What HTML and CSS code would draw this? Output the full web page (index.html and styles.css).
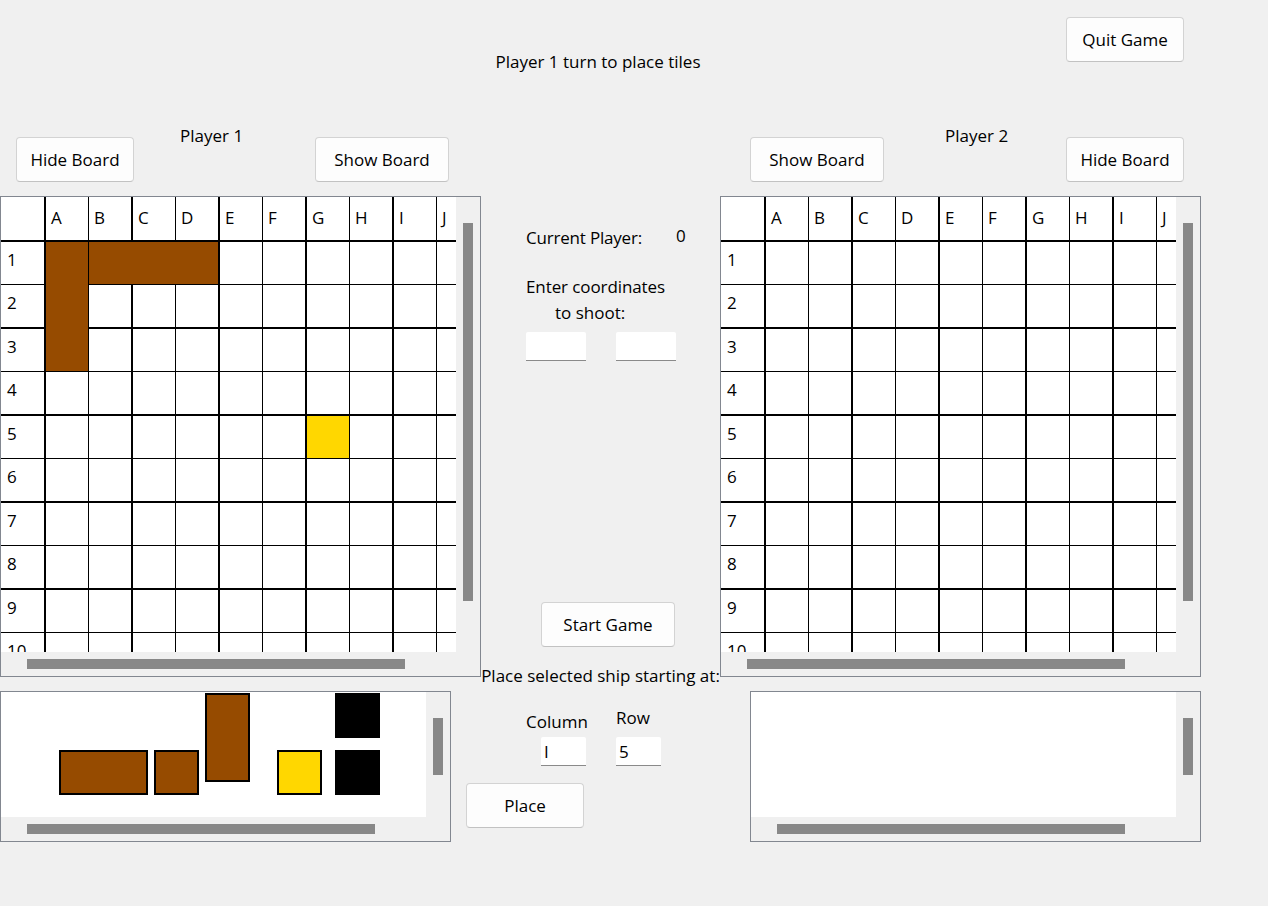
FILE: index.html
```html
<!DOCTYPE html>
<html>
<head>
<meta charset="utf-8">
<title>Battleship</title>
<link rel="stylesheet" href="styles.css">
</head>
<body>
<div class="app">
  <header class="top">
    <div></div>
    <div class="title">Player 1 turn to place tiles</div>
    <div class="top-right"><button class="btn w118 quit">Quit Game</button></div>
  </header>

  <div class="heads">
    <div class="head head-left">
      <button class="btn w118">Hide Board</button>
      <span class="player-label">Player 1</span>
      <button class="btn w134 push">Show Board</button>
    </div>
    <div></div>
    <div class="head head-right">
      <button class="btn w134">Show Board</button>
      <span class="player-label">Player 2</span>
      <button class="btn w118 push">Hide Board</button>
    </div>
  </div>

  <div class="main">
    <div class="scroller board">
      <div class="viewport">
        <div class="grid">
          <div class="r"><span></span><span>A</span><span>B</span><span>C</span><span>D</span><span>E</span><span>F</span><span>G</span><span>H</span><span>I</span><span>J</span></div>
          <div class="r"><span>1</span><span></span><span></span><span></span><span></span><span></span><span></span><span></span><span></span><span></span><span></span></div>
          <div class="r"><span>2</span><span></span><span></span><span></span><span></span><span></span><span></span><span></span><span></span><span></span><span></span></div>
          <div class="r"><span>3</span><span></span><span></span><span></span><span></span><span></span><span></span><span></span><span></span><span></span><span></span></div>
          <div class="r"><span>4</span><span></span><span></span><span></span><span></span><span></span><span></span><span></span><span></span><span></span><span></span></div>
          <div class="r"><span>5</span><span></span><span></span><span></span><span></span><span></span><span></span><span class="sel"></span><span></span><span></span><span></span></div>
          <div class="r"><span>6</span><span></span><span></span><span></span><span></span><span></span><span></span><span></span><span></span><span></span><span></span></div>
          <div class="r"><span>7</span><span></span><span></span><span></span><span></span><span></span><span></span><span></span><span></span><span></span><span></span></div>
          <div class="r"><span>8</span><span></span><span></span><span></span><span></span><span></span><span></span><span></span><span></span><span></span><span></span></div>
          <div class="r"><span>9</span><span></span><span></span><span></span><span></span><span></span><span></span><span></span><span></span><span></span><span></span></div>
          <div class="r"><span>10</span><span></span><span></span><span></span><span></span><span></span><span></span><span></span><span></span><span></span><span></span></div>
          <div class="placed ship-v3"></div>
          <div class="placed ship-h3"></div>
        </div>
      </div>
      <div class="vtrack"><div class="thumb-v"></div></div>
      <div class="htrack"><div class="thumb-h"></div></div>
      <div class="corner"></div>
    </div>

    <div class="center">
      <div class="cur"><span class="cur-label">Current Player:</span><span class="cur-val">0</span></div>
      <div class="prompt">Enter coordinates</div>
      <div class="prompt2">to shoot:</div>
      <div class="coords"><input class="field w60" type="text" value=""><input class="field w60" type="text" value=""></div>
      <button class="btn w134 start">Start Game</button>
    </div>

    <div class="scroller board">
      <div class="viewport">
        <div class="grid">
          <div class="r"><span></span><span>A</span><span>B</span><span>C</span><span>D</span><span>E</span><span>F</span><span>G</span><span>H</span><span>I</span><span>J</span></div>
          <div class="r"><span>1</span><span></span><span></span><span></span><span></span><span></span><span></span><span></span><span></span><span></span><span></span></div>
          <div class="r"><span>2</span><span></span><span></span><span></span><span></span><span></span><span></span><span></span><span></span><span></span><span></span></div>
          <div class="r"><span>3</span><span></span><span></span><span></span><span></span><span></span><span></span><span></span><span></span><span></span><span></span></div>
          <div class="r"><span>4</span><span></span><span></span><span></span><span></span><span></span><span></span><span></span><span></span><span></span><span></span></div>
          <div class="r"><span>5</span><span></span><span></span><span></span><span></span><span></span><span></span><span></span><span></span><span></span><span></span></div>
          <div class="r"><span>6</span><span></span><span></span><span></span><span></span><span></span><span></span><span></span><span></span><span></span><span></span></div>
          <div class="r"><span>7</span><span></span><span></span><span></span><span></span><span></span><span></span><span></span><span></span><span></span><span></span></div>
          <div class="r"><span>8</span><span></span><span></span><span></span><span></span><span></span><span></span><span></span><span></span><span></span><span></span></div>
          <div class="r"><span>9</span><span></span><span></span><span></span><span></span><span></span><span></span><span></span><span></span><span></span><span></span></div>
          <div class="r"><span>10</span><span></span><span></span><span></span><span></span><span></span><span></span><span></span><span></span><span></span><span></span></div>
        </div>
      </div>
      <div class="vtrack"><div class="thumb-v"></div></div>
      <div class="htrack"><div class="thumb-h"></div></div>
      <div class="corner"></div>
    </div>
  </div>

  <div class="caption-row">
    <div></div>
    <div class="caption">Place selected ship starting at:</div>
    <div></div>
  </div>

  <div class="bottom">
    <div class="scroller tray">
      <div class="viewport">
        <div class="ships">
          <div class="ship brown long"></div>
          <div class="ship brown small"></div>
          <div class="ship brown tall"></div>
          <div class="ship yellow small gap27"></div>
          <div class="stack">
            <div class="ship black"></div>
            <div class="ship black"></div>
          </div>
        </div>
      </div>
      <div class="vtrack"><div class="thumb-v"></div></div>
      <div class="htrack"><div class="thumb-h"></div></div>
      <div class="corner"></div>
    </div>

    <div class="placer">
      <div class="fields">
        <div class="fcol fcol1">
          <div class="flabel l1">Column</div>
          <input class="field w45 in1" type="text" value="I">
        </div>
        <div class="fcol fcol2">
          <div class="flabel l2">Row</div>
          <input class="field w45 in2" type="text" value="5">
        </div>
      </div>
      <button class="btn w118 place">Place</button>
    </div>

    <div class="scroller tray">
      <div class="viewport"></div>
      <div class="vtrack"><div class="thumb-v"></div></div>
      <div class="htrack"><div class="thumb-h"></div></div>
      <div class="corner"></div>
    </div>
  </div>
</div>
</body>
</html>
```

FILE: styles.css
```css
* { box-sizing: border-box; }

html, body {
  margin: 0;
  padding: 0;
  background: #f0f0f0;
}

body {
  font-family: "Open Sans", "Noto Sans", sans-serif;
  font-size: 17px;
  line-height: 24px;
  color: #000;
}

.app {
  width: 1201px;
}

/* ---------- top bar ---------- */
.top {
  display: grid;
  grid-template-columns: 481px 239px 481px;
  height: 120px;
}

.title {
  padding-top: 50px;
  padding-right: 5px;
  text-align: center;
  white-space: nowrap;
}

.top-right {
  padding-left: 346px;
  padding-top: 17px;
}

/* ---------- buttons ---------- */
.btn {
  display: block;
  height: 45px;
  padding: 0;
  margin: 0;
  background: #fdfdfd;
  border: 1px solid #d3d3d3;
  border-bottom-color: #c2c2c2;
  border-radius: 4px;
  font: inherit;
  color: #000;
  white-space: nowrap;
}
.w118 { width: 118px; }
.w134 { width: 134px; }

/* ---------- board heads ---------- */
.heads {
  display: grid;
  grid-template-columns: 481px 239px 481px;
  height: 76px;
}

.head {
  display: flex;
  align-items: flex-start;
}
.head .btn { margin-top: 17px; }
.head .push { margin-left: auto; }

.head-left { padding-left: 16px; padding-right: 32px; }
.head-left .player-label { margin-left: 46px; }

.head-right { padding-left: 30px; padding-right: 17px; }
.head-right .player-label { margin-left: 61px; }

.player-label {
  margin-top: 4px;
  white-space: nowrap;
}

/* ---------- main row ---------- */
.main {
  display: grid;
  grid-template-columns: 481px 239px 481px;
  height: 481px;
}

/* generic scroll viewer */
.scroller {
  display: grid;
  border: 1px solid #828790;
  background: #f0f0f0;
}
.board {
  grid-template-columns: 455px 24px;
  grid-template-rows: 455px 24px;
}
.tray {
  grid-template-columns: 425px 24px;
  grid-template-rows: 125px 24px;
}

.viewport {
  background: #fff;
  overflow: hidden;
  position: relative;
}

.thumb-v {
  width: 10px;
  margin: 26px 0 0 7px;
  background: #888;
}
.board .thumb-v { height: 378px; }
.tray .thumb-v { height: 57px; }

.thumb-h {
  height: 10px;
  margin: 7px 0 0 26px;
  background: #888;
}
.board .thumb-h { width: 378px; }
.tray .thumb-h { width: 348px; }

/* ---------- grid ---------- */
.grid {
  position: relative;
  width: 478px;
}

.r {
  display: flex;
  height: 43px;
}
.r:nth-child(even) {
  height: 44px;
  border-top: 2px solid #000;
}
.r:nth-child(odd):not(:first-child) {
  border-top: 1px solid #000;
}

.r > span {
  display: block;
  height: 100%;
  padding-top: 6px;
  white-space: nowrap;
  overflow: hidden;
}
.r:first-child > span { padding-top: 9px; }

.r > span:first-child {
  width: 43px;
  padding-left: 6px;
}
.r > span:nth-child(even) {
  width: 44px;
  border-left: 2px solid #000;
  padding-left: 5px;
}
.r > span:nth-child(odd):not(:first-child) {
  width: 43px;
  border-left: 1px solid #000;
  padding-left: 5px;
}

.r > span.sel { background: #ffd700; }

.placed {
  position: absolute;
  background: #964b00;
}
.ship-v3 { left: 45px; top: 45px; width: 42px; height: 129px; }
.ship-h3 { left: 88px; top: 45px; width: 129px; height: 42px; }

/* ---------- center column ---------- */
.center {
  display: flex;
  flex-direction: column;
  align-items: flex-start;
  padding-left: 45px;
}

.cur {
  display: grid;
  grid-template-columns: 150px auto;
  margin-top: 28px;
  height: 26px;
}
.cur-label { padding-top: 2px; white-space: nowrap; letter-spacing: -0.2px; }

.prompt {
  margin-top: 25px;
  white-space: nowrap;
  letter-spacing: -0.1px;
}
.prompt2 {
  margin-top: 2px;
  margin-left: 29px;
  white-space: nowrap;
}

.coords {
  display: flex;
  gap: 30px;
  margin-top: 7px;
}

.field {
  display: block;
  height: 29px;
  margin: 0;
  padding: 0 0 0 3px;
  background: #fff;
  border: none;
  border-bottom: 1px solid #8a8a8a;
  border-radius: 2px 2px 0 0;
  font: inherit;
  color: #000;
  outline: none;
}
.w60 { width: 60px; }
.w45 { width: 45px; }

.start {
  margin-top: 241px;
  margin-left: 15px;
}

/* ---------- caption ---------- */
.caption-row {
  display: grid;
  grid-template-columns: 481px 239px 481px;
  margin-top: -13px;
  height: 24px;
}
.caption {
  text-align: center;
  white-space: nowrap;
  margin-left: -6px;
  margin-right: -6px;
}

/* ---------- bottom row ---------- */
.bottom {
  display: grid;
  grid-template-columns: 451px 299px 451px;
  height: 151px;
  margin-top: 3px;
}

.ships {
  display: flex;
  align-items: flex-start;
  padding-left: 58px;
}

.ship {
  border: 2px solid #000;
  flex: none;
}
.brown { background: #964b00; }
.yellow { background: #ffd700; }
.black { background: #000; width: 45px; height: 45px; }

.long { width: 89px; height: 45px; margin-top: 58px; }
.small { width: 45px; height: 45px; margin-top: 58px; margin-left: 6px; }
.tall { width: 45px; height: 89px; margin-top: 1px; margin-left: 6px; }
.small.gap27 { margin-left: 27px; }

.stack {
  display: flex;
  flex-direction: column;
  gap: 12px;
  margin-top: 1px;
  margin-left: 13px;
}

.placer {
  display: flex;
  flex-direction: column;
  align-items: flex-start;
}

.fields {
  display: grid;
  grid-template-columns: 90px 60px;
  padding-left: 75px;
}

.fcol { display: flex; flex-direction: column; align-items: flex-start; }
.flabel { white-space: nowrap; }
.l1 { margin-top: 19px; }
.l2 { margin-top: 15px; }
.in1 { margin-top: 3px; margin-left: 15px; }
.in2 { margin-top: 7px; }

.place {
  margin-top: 17px;
  margin-left: 15px;
}
```
